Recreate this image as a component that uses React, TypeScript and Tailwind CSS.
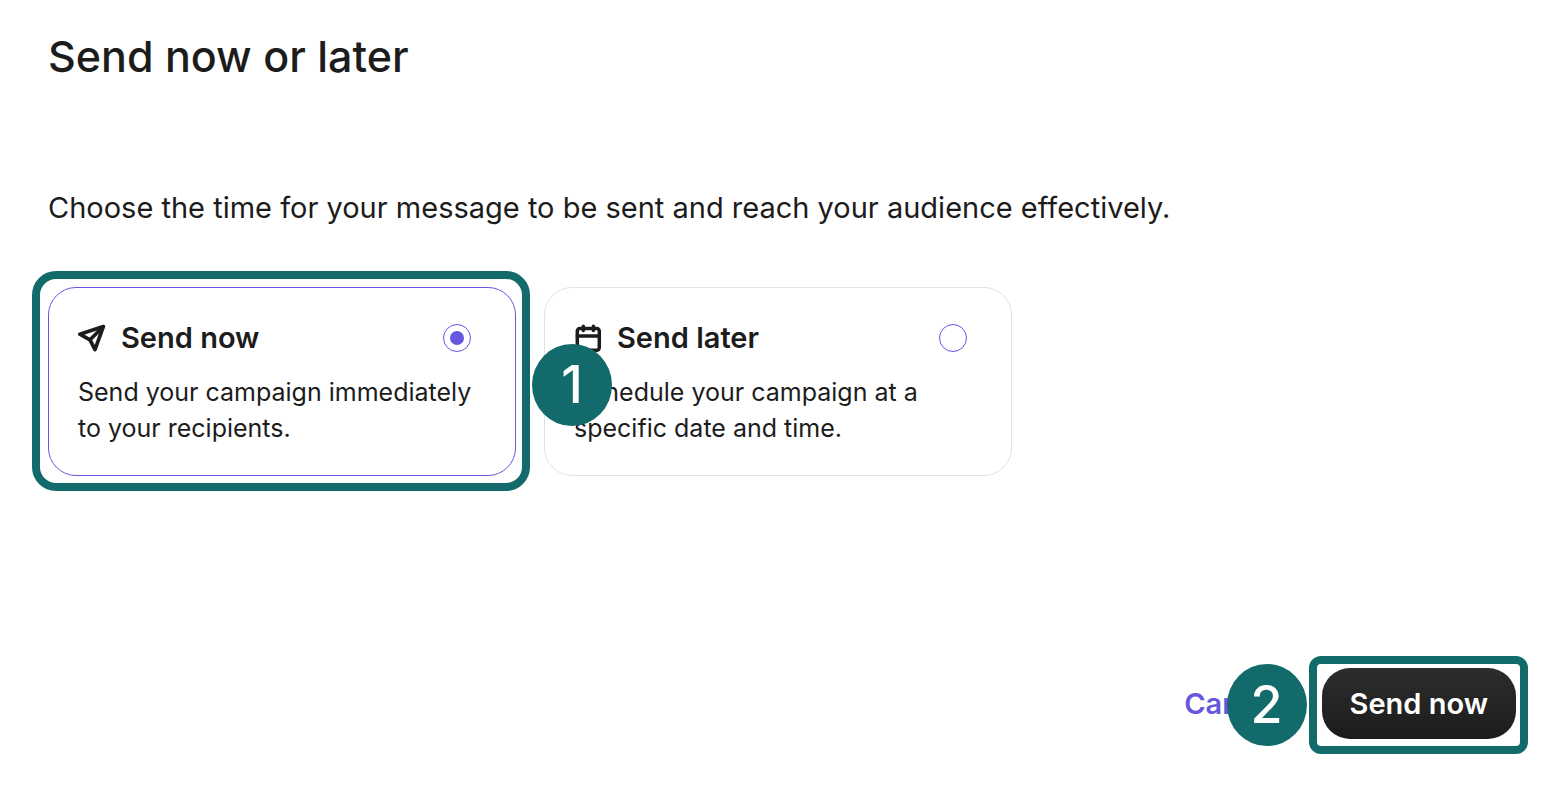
import { useState } from "react";
import type { ReactNode } from "react";

type Timing = "now" | "later";

function SendIcon() {
  return (
    <svg
      aria-hidden="true"
      viewBox="0 0 28 28"
      className="size-7 shrink-0"
      fill="none"
      stroke="currentColor"
      strokeWidth="3.7"
      strokeLinecap="round"
      strokeLinejoin="round"
    >
      <path d="M25.3 2.6 1.8 10.2 12 15.8 17 25.6Z" />
      <path d="M25 3 12 15.8" />
    </svg>
  );
}

function CalendarIcon() {
  return (
    <svg
      aria-hidden="true"
      viewBox="0 0 28 28"
      className="size-7 shrink-0"
      fill="none"
      stroke="currentColor"
      strokeWidth="3.5"
      strokeLinecap="round"
      strokeLinejoin="round"
    >
      <rect x="3.3" y="4.4" width="22" height="21.8" rx="2.6" />
      <path d="M3.3 12H25.3M9.3 2.2v4.3M19.4 2.2v4.3" />
    </svg>
  );
}

function StepBadge({ step }: { step: number }) {
  return (
    <span className="flex h-[82px] w-20 items-center justify-center rounded-[50%] bg-[#126b6a] font-[Inter,sans-serif] text-[52px] leading-none font-medium text-white">
      {step}
    </span>
  );
}

interface OptionProps {
  value: Timing;
  title: string;
  description: string;
  icon: ReactNode;
  selected: boolean;
  onSelect: (value: Timing) => void;
}

function Option({ value, title, description, icon, selected, onSelect }: OptionProps) {
  return (
    <label
      className={`flex h-full cursor-pointer flex-col gap-[18px] rounded-[28px] border bg-white pt-8 pr-7 pb-[29px] pl-[29px] ${
        selected ? "border-[#6558de]" : "border-[#e2e2e2]"
      }`}
    >
      <span className="flex items-center pr-4">
        {icon}
        <span className="ml-[15px] grow text-[29px] leading-9 font-semibold">{title}</span>
        <input
          type="radio"
          name="timing"
          value={value}
          checked={selected}
          onChange={() => onSelect(value)}
          className="size-7 appearance-none rounded-full border border-[#6558de] bg-white bg-clip-content p-[6px] checked:bg-[#6558de]"
        />
      </span>
      <span className="text-[25px] leading-9">{description}</span>
    </label>
  );
}

export default function App() {
  const [timing, setTiming] = useState<Timing>("now");

  return (
    <main className="flex min-h-screen flex-col bg-white px-12 pt-7 pb-[51px] font-[Inter,sans-serif] text-[#1c1c1c]">
      <h1 className="text-[43px] leading-14 font-medium">Send now or later</h1>
      <p className="mt-[104px] text-[29px] leading-10">
        Choose the time for your message to be sent and reach your audience effectively.
      </p>

      <div className="mt-[59px] grid max-w-[964px] grid-cols-2 gap-7">
        <div className="relative">
          <Option
            value="now"
            title="Send now"
            description="Send your campaign immediately to your recipients."
            icon={<SendIcon />}
            selected={timing === "now"}
            onSelect={setTiming}
          />
          <div className="pointer-events-none absolute -top-4 -right-3.5 -bottom-[15px] -left-4 rounded-3xl border-8 border-[#126b6a]" />
          <div className="pointer-events-none absolute top-[57px] left-full z-10 pl-4">
            <StepBadge step={1} />
          </div>
        </div>
        <Option
          value="later"
          title="Send later"
          description="Schedule your campaign at a specific date and time."
          icon={<CalendarIcon />}
          selected={timing === "later"}
          onSelect={setTiming}
        />
      </div>

      <div className="-mr-2 mt-auto flex items-center justify-end gap-10">
        <button type="button" className="text-[29px] leading-9 font-semibold text-[#6558de]">
          Cancel
        </button>
        <div className="relative">
          <button
            type="button"
            className="block rounded-[28px] bg-linear-to-b from-[#2d2d2d] to-[#1c1c1c] px-7 pt-[18px] pb-[17px] text-[29px] leading-9 font-semibold text-white"
          >
            Send now
          </button>
          <div className="pointer-events-none absolute -top-3 -right-3 -bottom-[15px] -left-[13px] rounded-xl border-8 border-[#126b6a]" />
          <div className="pointer-events-none absolute -top-1 right-full pr-[15px]">
            <StepBadge step={2} />
          </div>
        </div>
      </div>
    </main>
  );
}
